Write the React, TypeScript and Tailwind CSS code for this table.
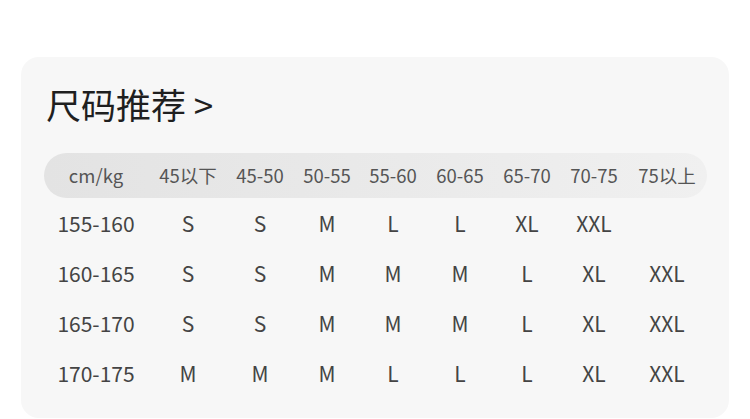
import React from "react";

const cols = ["cm/kg", "45以下", "45-50", "50-55", "55-60", "60-65", "65-70", "70-75", "75以上"];

const rows = [
  ["155-160", "S", "S", "M", "L", "L", "XL", "XXL", ""],
  ["160-165", "S", "S", "M", "M", "M", "L", "XL", "XXL"],
  ["165-170", "S", "S", "M", "M", "M", "L", "XL", "XXL"],
  ["170-175", "M", "M", "M", "L", "L", "L", "XL", "XXL"],
];

const grid = "grid grid-cols-[104px_80px_64px_70px_62px_72px_62px_72px_74px]";

export default function App() {
  return (
    <div className="w-[750px] h-[419px] bg-white pt-[57px] pl-[21px] overflow-hidden font-['Noto_Sans_CJK_SC','Noto_Sans',sans-serif]">
      <div className="w-[708px] h-[361px] bg-[#f7f7f7] rounded-[18px] pt-[24px] pl-[23px]">
        {/* Title */}
        <h2 className="text-[35px] leading-[46px] text-[#1f1f1f] pl-[2px]">尺码推荐 &gt;</h2>

        {/* Header pill */}
        <div className={`${grid} mt-[26px] h-[45px] w-[663px] items-center rounded-full bg-gradient-to-r from-[#e3e3e3] to-[#f0f0f0] text-[18.5px] text-[#555]`}>
          {cols.map((c) => (
            <div key={c} className="text-center">{c}</div>
          ))}
        </div>

        {/* Rows */}
        <div className="pt-[1px]">
          {rows.map((r, i) => (
            <div key={i} className={`${grid} h-[50px] items-center text-[21px] text-[#444]`}>
              {r.map((v, j) => (
                <div key={j} className="text-center">{v}</div>
              ))}
            </div>
          ))}
        </div>
      </div>
    </div>
  );
}
